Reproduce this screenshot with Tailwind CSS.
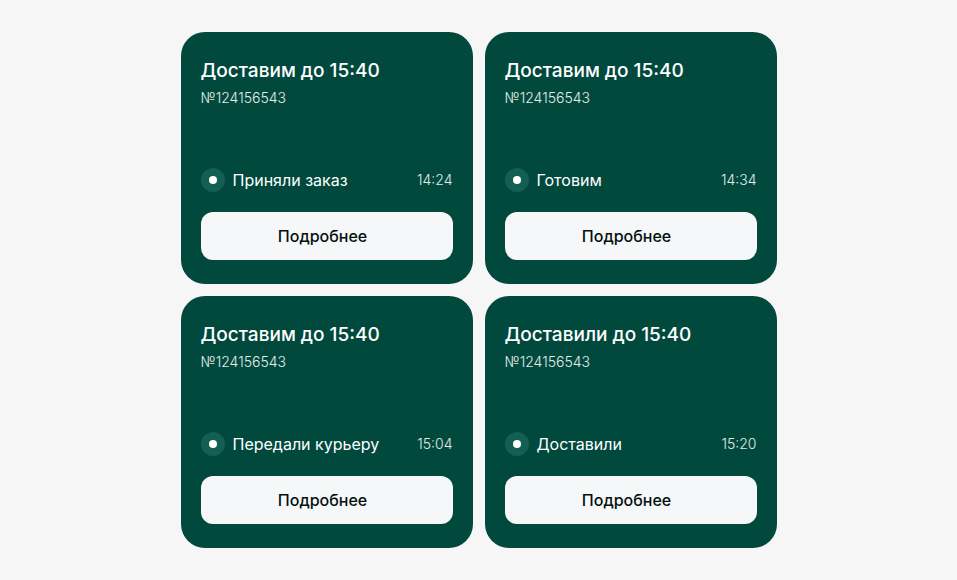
<!DOCTYPE html>
<html lang="ru">
  <head>
    <meta charset="UTF-8" />
    <meta name="viewport" content="width=device-width, initial-scale=1.0" />
    <title>Заказы</title>
    <script src="https://cdn.jsdelivr.net/npm/@tailwindcss/browser@4"></script>
  </head>
  <body class="bg-[#f6f6f6] font-[Inter,sans-serif]">
    <main class="mx-auto grid max-w-[660px] grid-cols-2 gap-3 p-8 text-white">
      <article class="rounded-3xl bg-[#00493c] px-5 py-6">
        <h2 class="text-[19px] leading-[30px] font-medium">Доставим до 15:40</h2>
        <p class="mt-0.5 text-sm leading-5 font-light text-white/90">№124156543</p>
        <div class="mt-15 flex items-center gap-2">
          <span class="flex size-6 items-center justify-center rounded-full bg-[#145f53]">
            <span class="size-2 rounded-full bg-white"></span>
          </span>
          <span class="text-base leading-6">Приняли заказ</span>
          <time class="ml-auto text-sm leading-5 font-light text-white/90">14:24</time>
        </div>
        <button type="button" class="mt-5 h-12 w-full rounded-xl bg-[#f6f7f9] pr-2 text-base font-medium text-[#04100d]">
          Подробнее
        </button>
      </article>

      <article class="rounded-3xl bg-[#00493c] px-5 py-6">
        <h2 class="text-[19px] leading-[30px] font-medium">Доставим до 15:40</h2>
        <p class="mt-0.5 text-sm leading-5 font-light text-white/90">№124156543</p>
        <div class="mt-15 flex items-center gap-2">
          <span class="flex size-6 items-center justify-center rounded-full bg-[#145f53]">
            <span class="size-2 rounded-full bg-white"></span>
          </span>
          <span class="text-base leading-6">Готовим</span>
          <time class="ml-auto text-sm leading-5 font-light text-white/90">14:34</time>
        </div>
        <button type="button" class="mt-5 h-12 w-full rounded-xl bg-[#f6f7f9] pr-2 text-base font-medium text-[#04100d]">
          Подробнее
        </button>
      </article>

      <article class="rounded-3xl bg-[#00493c] px-5 py-6">
        <h2 class="text-[19px] leading-[30px] font-medium">Доставим до 15:40</h2>
        <p class="mt-0.5 text-sm leading-5 font-light text-white/90">№124156543</p>
        <div class="mt-15 flex items-center gap-2">
          <span class="flex size-6 items-center justify-center rounded-full bg-[#145f53]">
            <span class="size-2 rounded-full bg-white"></span>
          </span>
          <span class="text-base leading-6">Передали курьеру</span>
          <time class="ml-auto text-sm leading-5 font-light text-white/90">15:04</time>
        </div>
        <button type="button" class="mt-5 h-12 w-full rounded-xl bg-[#f6f7f9] pr-2 text-base font-medium text-[#04100d]">
          Подробнее
        </button>
      </article>

      <article class="rounded-3xl bg-[#00493c] px-5 py-6">
        <h2 class="text-[19px] leading-[30px] font-medium">Доставили до 15:40</h2>
        <p class="mt-0.5 text-sm leading-5 font-light text-white/90">№124156543</p>
        <div class="mt-15 flex items-center gap-2">
          <span class="flex size-6 items-center justify-center rounded-full bg-[#145f53]">
            <span class="size-2 rounded-full bg-white"></span>
          </span>
          <span class="text-base leading-6">Доставили</span>
          <time class="ml-auto text-sm leading-5 font-light text-white/90">15:20</time>
        </div>
        <button type="button" class="mt-5 h-12 w-full rounded-xl bg-[#f6f7f9] pr-2 text-base font-medium text-[#04100d]">
          Подробнее
        </button>
      </article>
    </main>
  </body>
</html>
